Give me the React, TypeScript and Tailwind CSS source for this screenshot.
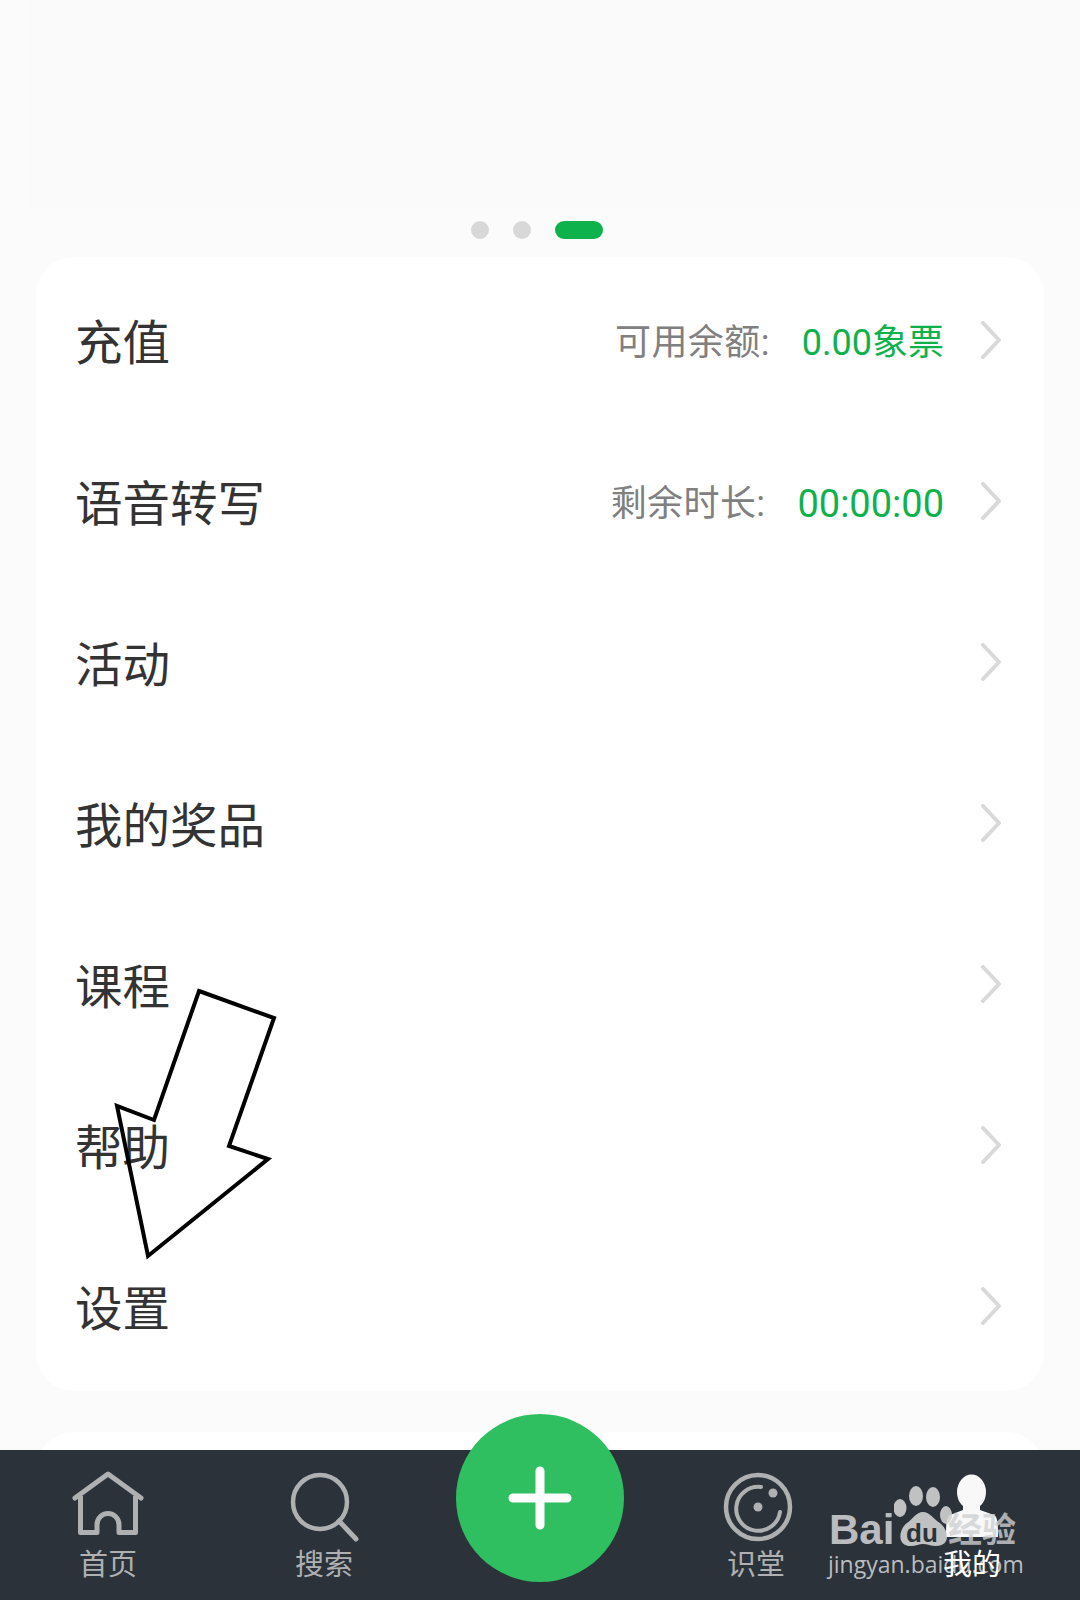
const rows = [
  { title: "充值", label: "可用余额:", value: "0.00", unit: "象票" },
  { title: "语音转写", label: "剩余时长:", value: "00:00:00" },
  { title: "活动" },
  { title: "我的奖品" },
  { title: "课程" },
  { title: "帮助" },
  { title: "设置" },
];

function Chevron() {
  return (
    <svg width="22" height="38" viewBox="0 0 22 38" fill="none" className="mb-[5px] ml-[36px] shrink-0">
      <path d="M3 2 L19 19 L3 36" stroke="#d9d9d9" strokeWidth="4" strokeLinecap="round" strokeLinejoin="round" />
    </svg>
  );
}

function Row({ title, label, value, unit }: { title: string; label?: string; value?: string; unit?: string }) {
  return (
    <div className="flex h-[161px] items-center pl-[40px] pr-[42px]">
      <span className="-ml-[1px] mt-[4px] flex-1 text-[47.5px] leading-none text-[#333333]">{title}</span>
      {label && <span className="mr-[32px] text-[36px] leading-none tracking-[0.4px] text-[#808080]">{label}</span>}
      {value && (
        <span className={`leading-none text-[#0eb24c] ${unit ? "text-[36px]" : "text-[38px]"}`}>
          {value}
          {unit}
        </span>
      )}
      <Chevron />
    </div>
  );
}

function NavItem({ label, active, children }: { label: string; active?: boolean; children: React.ReactNode }) {
  return (
    <div className="flex flex-col items-center pt-[20px]">
      <svg width="80" height="76" viewBox="0 0 80 76" fill="none">
        {children}
      </svg>
      <span className={`relative z-20 mt-[4px] text-[29px] leading-[30px] ${active ? "text-white" : "text-[#aeb0b2]"}`}>{label}</span>
    </div>
  );
}

function Watermark() {
  return (
    <div className="absolute left-[828px] top-[20px] z-10 h-[120px] w-[200px] text-[#cfd0d2]/90">
      <span className="absolute left-[1px] top-[35px] text-[42px] font-bold leading-[50px] font-['Liberation_Sans']">Bai</span>
      <svg width="70" height="80" viewBox="0 0 70 80" fill="currentColor" className="absolute left-[66px] top-0">
        <ellipse cx="6" cy="38" rx="6.5" ry="9" />
        <ellipse cx="22" cy="26" rx="7" ry="10" />
        <ellipse cx="39" cy="27" rx="7" ry="10" />
        <ellipse cx="52" cy="45" rx="6" ry="9" />
        <path d="M29 42 C22 42 19 49 13 53 C5 59 2 76 17 76 C22 76 25 74 29 74 C33 74 37 76 42 76 C57 76 55 60 46 53 C39 49 36 42 29 42 Z" />
      </svg>
      <span className="absolute left-[78px] top-[48px] text-[26px] font-bold leading-[30px] text-[#2b323a] font-['Liberation_Sans']">du</span>
      <span className="absolute left-[120px] top-[43px] text-[34px] font-bold leading-[34px] text-[#cfd0d2]/80">经验</span>
      <span className="absolute left-0 top-[78px] whitespace-nowrap text-[23px] leading-[32px] font-['Open_Sans']">jingyan.baidu.com</span>
    </div>
  );
}

export default function App() {
  return (
    <div className="flex h-[1600px] w-[1080px] flex-col overflow-hidden bg-[#fbfbfb] font-['Roboto','Noto_Sans_CJK_SC',sans-serif]">
      <div className="relative min-h-0 flex-1">
        <div className="ml-[30px] h-[207px] bg-[#fafafa]" />
        <div className="mt-[14px] flex h-[18px] justify-center gap-[24px] pr-[6px]">
          <div className="h-[18px] w-[18px] rounded-full bg-[#d8d8d8]" />
          <div className="h-[18px] w-[18px] rounded-full bg-[#d8d8d8]" />
          <div className="h-[18px] w-[48px] rounded-full bg-[#0eb24c]" />
        </div>
        <div className="mx-[36px] mt-[18px] rounded-[38px] bg-white pb-[2px] pt-[5px]">
          {rows.map((r) => (
            <Row key={r.title} {...r} />
          ))}
        </div>
        <div className="mx-[36px] mt-[41px] h-[60px] rounded-t-[38px] bg-white" />
        <svg width="300" height="300" viewBox="0 0 300 300" fill="none" className="absolute left-[100px] top-[975px]">
          <path
            d="M99 16 L174 43 L129 171 L168 184 L48 281 L17 131 L54 145 Z"
            stroke="#000"
            strokeWidth="4"
            strokeLinejoin="miter"
          />
        </svg>
      </div>

      <div className="relative grid h-[150px] shrink-0 grid-cols-5 bg-[#2b323a]">
        <NavItem label="首页">
          <path d="M7 28 L40 4 L73 28" stroke="#aeb0b2" strokeWidth="5" strokeLinecap="round" strokeLinejoin="round" />
          <path d="M12.5 26 V62.5 H29 V54.5 A11 11 0 0 1 51 54.5 V62.5 H67.5 V26" stroke="#aeb0b2" strokeWidth="5" strokeLinejoin="round" />
        </NavItem>
        <NavItem label="搜索">
          <circle cx="36" cy="32" r="27" stroke="#aeb0b2" strokeWidth="4.5" />
          <path d="M55 51 L72 69" stroke="#aeb0b2" strokeWidth="5" strokeLinecap="round" />
        </NavItem>
        <div className="flex justify-center">
          <div className="z-10 -mt-[36px] flex h-[168px] w-[168px] items-center justify-center rounded-full bg-[#2fbf60]">
            <svg width="64" height="64" viewBox="0 0 64 64" fill="none">
              <path d="M32 5 V59 M5 32 H59" stroke="#fff" strokeWidth="9" strokeLinecap="round" />
            </svg>
          </div>
        </div>
        <NavItem label="识堂">
          <circle cx="42" cy="37" r="32" stroke="#aeb0b2" strokeWidth="4.5" />
          <path d="M45 17 A22 22 0 1 0 64 42" stroke="#aeb0b2" strokeWidth="4" strokeLinecap="round" />
          <circle cx="42" cy="37" r="4.5" fill="#aeb0b2" />
          <circle cx="57" cy="23" r="4.5" fill="#aeb0b2" />
        </NavItem>
        <NavItem label="我的" active>
          <ellipse cx="39.5" cy="22" rx="14.5" ry="17.5" fill="#f8f8f8" />
          <path d="M31 34 H48 V40 L62 45 C66 47 66 56 66 67 H14 C14 56 14 47 18 45 L31 40 Z" fill="#f8f8f8" />
        </NavItem>
        <Watermark />
      </div>
    </div>
  );
}
